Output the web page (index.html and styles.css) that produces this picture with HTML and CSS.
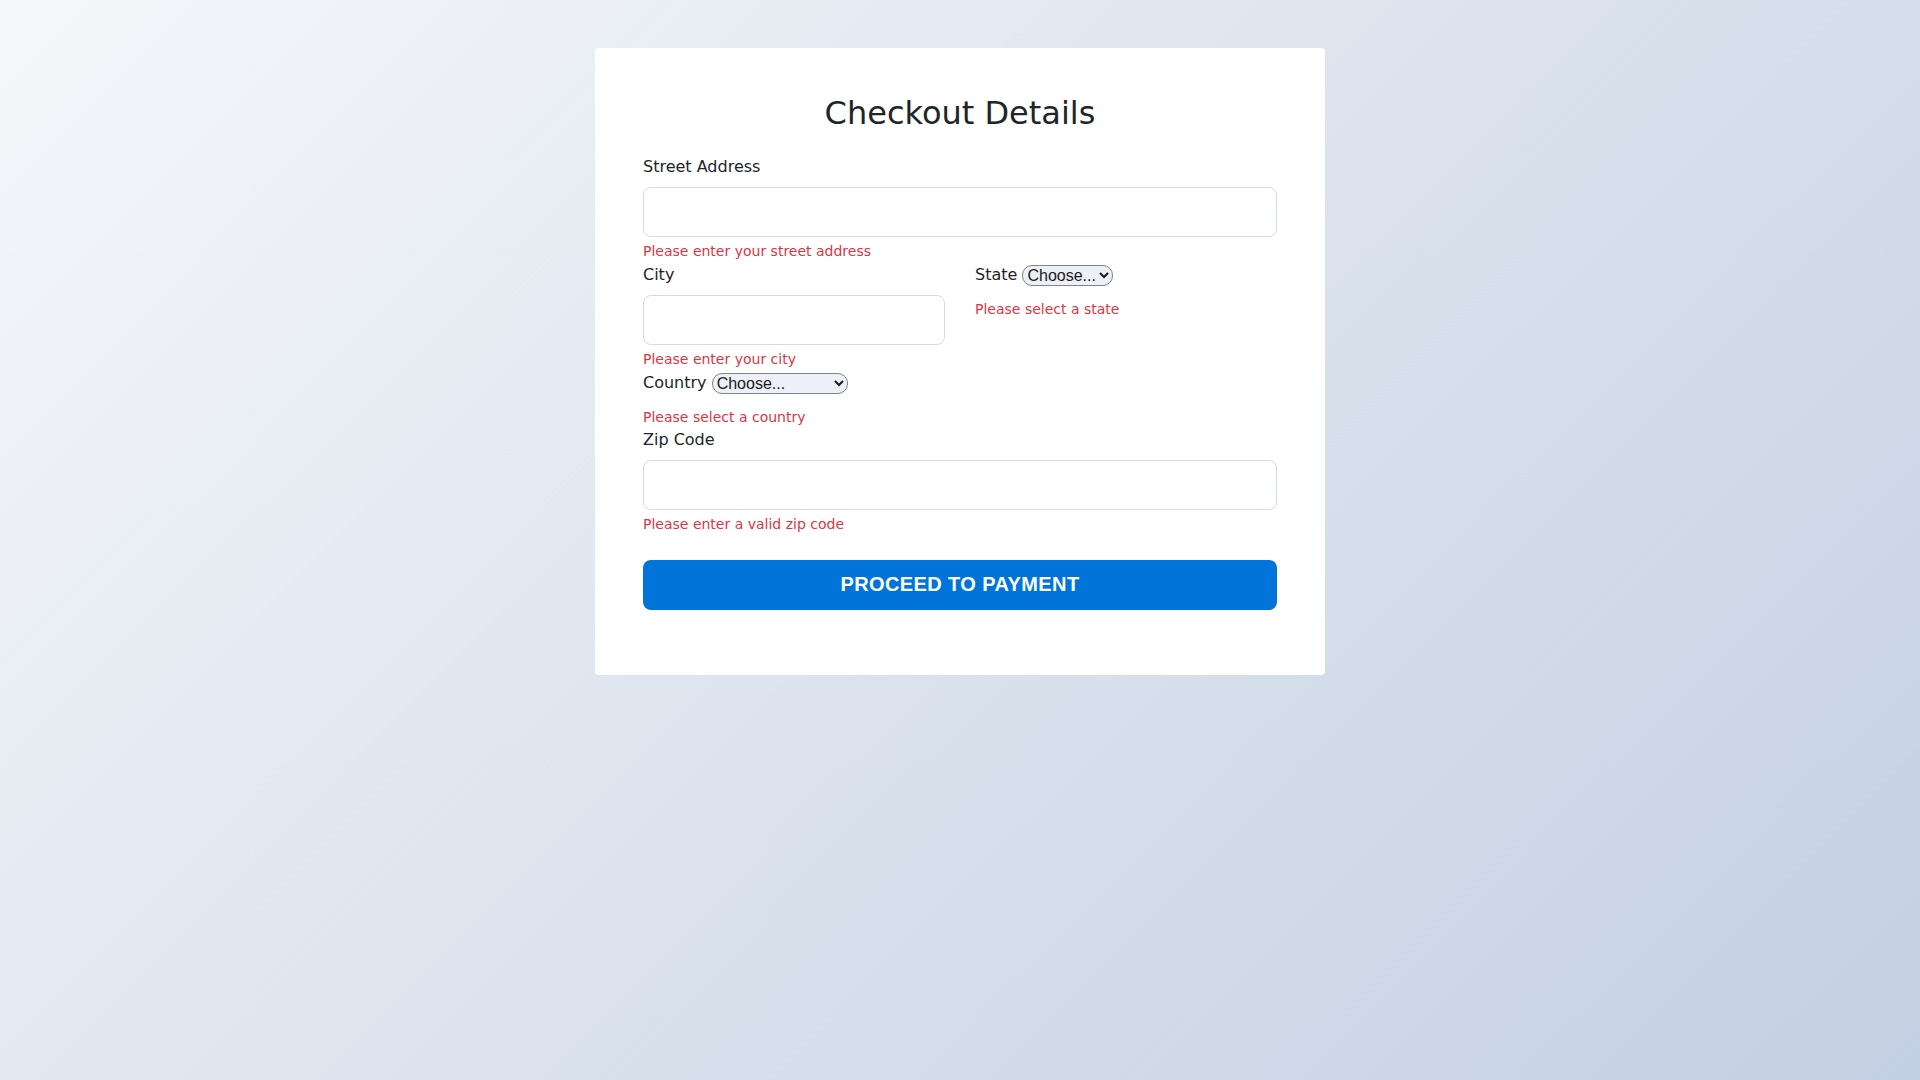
FILE: index.html
```html
<!DOCTYPE html>
<html lang="en">
<head>
<meta charset="utf-8">
<title>Checkout Details</title>
<link rel="stylesheet" href="styles.css">
</head>
<body>
<main class="card">
  <h2 class="title">Checkout Details</h2>
  <form class="form" novalidate>
    <div class="group">
      <label class="label" for="street">Street Address</label>
      <input class="input" id="street" type="text">
      <div class="error">Please enter your street address</div>
    </div>
    <div class="row">
      <div class="group">
        <label class="label" for="city">City</label>
        <input class="input" id="city" type="text">
        <div class="error">Please enter your city</div>
      </div>
      <div class="group">
        <label class="label">State <select class="select">
          <option>Choose...</option>
          <option>CA</option>
          <option>NY</option>
          <option>TX</option>
        </select></label>
        <div class="error">Please select a state</div>
      </div>
    </div>
    <div class="group">
      <label class="label">Country <select class="select">
        <option>Choose...</option>
        <option>United States</option>
        <option>Canada</option>
        <option>United Kingdom</option>
      </select></label>
      <div class="error">Please select a country</div>
    </div>
    <div class="group">
      <label class="label" for="zip">Zip Code</label>
      <input class="input" id="zip" type="text">
      <div class="error">Please enter a valid zip code</div>
    </div>
    <button class="btn" type="button">Proceed to Payment</button>
  </form>
</main>
</body>
</html>
```

FILE: styles.css
```css
html, body {
  margin: 0;
  padding: 0;
}

body {
  min-height: 100vh;
  background: linear-gradient(135deg, #f5f7fa 0%, #c3cfe2 100%);
  font-family: "DejaVu Sans", sans-serif;
  font-size: 16px;
  line-height: 1.5;
  color: #212529;
  padding-top: 48px;
  box-sizing: border-box;
}

.card {
  width: 730px;
  margin: 0 auto;
  background: #ffffff;
  border-radius: 4px;
  padding: 46px 48px 65px;
  box-sizing: border-box;
}

.title {
  margin: 0 0 23px;
  font-size: 32px;
  font-weight: 400;
  line-height: 1.2;
  text-align: center;
  color: #212529;
}

.form {
  display: flex;
  flex-direction: column;
}

.group {
  display: flex;
  flex-direction: column;
  align-items: flex-start;
}

.label {
  display: block;
  margin-bottom: 8px;
  line-height: 24px;
  height: 24px;
}

.input {
  width: 100%;
  height: 50px;
  box-sizing: border-box;
  padding: 12px 16px;
  border: 1px solid #d3dbe8;
  border-radius: 8px;
  font-family: "DejaVu Sans", sans-serif;
  font-size: 16px;
  background: #fff;
  outline: none;
}

.error {
  margin-top: 4px;
  font-size: 14px;
  line-height: 21.6px;
  color: #dc3545;
}

.row {
  display: grid;
  grid-template-columns: 1fr 1fr;
  column-gap: 30px;
}

.select {
  font-family: "Liberation Sans", Arial, sans-serif;
  font-size: 16px;
  color: #1a1a1a;
  vertical-align: middle;
  border: 1px solid #7b8494;
  border-radius: 10px;
  background-color: #edf0f6;
  padding: 0;
}

.btn {
  margin-top: 24px;
  height: 50px;
  width: 100%;
  border: none;
  border-radius: 8px;
  background: #0074d9;
  color: #fff;
  font-family: "Liberation Sans", Arial, sans-serif;
  font-size: 20px;
  font-weight: 700;
  letter-spacing: 0.4px;
  text-transform: uppercase;
  cursor: pointer;
}
```
